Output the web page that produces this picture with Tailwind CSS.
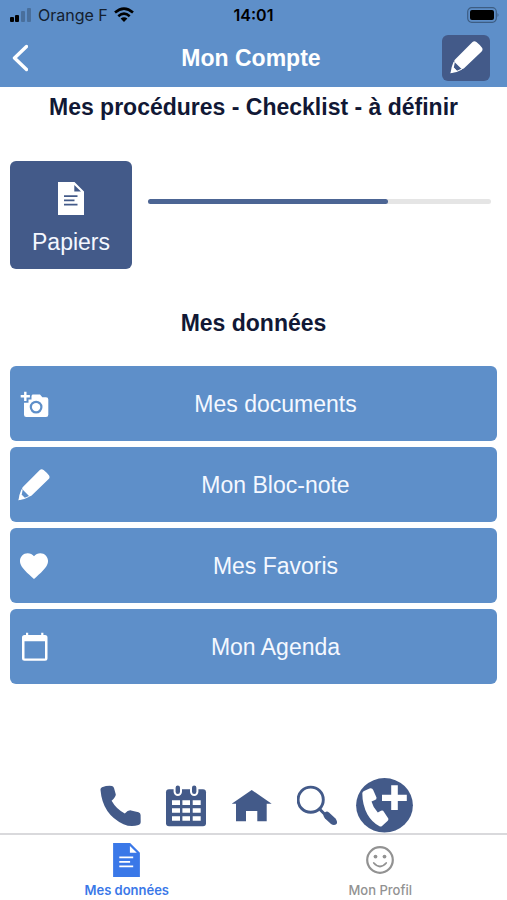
<!DOCTYPE html>
<html lang="fr">
<head>
<meta charset="utf-8">
<meta name="viewport" content="width=device-width, initial-scale=1">
<title>Mon Compte</title>
<script src="https://cdn.jsdelivr.net/npm/@tailwindcss/browser@4"></script>
</head>
<body class="flex min-h-screen flex-col bg-white font-['Liberation_Sans',Arial,sans-serif] text-[23px] text-[#111835]">

<!-- Shared icon shapes -->
<svg class="hidden" aria-hidden="true">
  <symbol id="pencil" viewBox="0 0 34 34">
    <path fill="currentColor" d="M23.200 1Q25-.6 27.200 1Q30.600 3.600 33 7Q34.200 9 32.600 10.700L14.500 28.200Q13.200 29.300 11.700 28.600L4.600 21.600Q4 20.200 5.200 19Z"/>
    <path fill="currentColor" d="M3.700 21.500L5 22 3.900 27.300 7.200 30.600 11.800 28.600 12.600 29.300Q7 32.600.5 33.300Q1.200 27 3.700 21.500Z"/>
    <path fill="currentColor" d="M3.600 27.400L7 30.700.5 33.300Z"/>
  </symbol>
  <symbol id="document" viewBox="0 0 26 33">
    <path fill="currentColor" fill-rule="evenodd" d="M0 0H16.500L26 9.500V33H0ZM16.300 3V9.500H23ZM6 13.200V14.900H19.500V13.200ZM6 17.500V19.200H16.500V17.500ZM6 21.800V23.500H19.500V21.800Z"/>
  </symbol>
</svg>

<header class="bg-[#5e8fc9]">
  <div class="grid h-7 grid-cols-3 items-center px-2 pt-0.5 font-[Inter,sans-serif] text-[16px] leading-6 text-black">
    <div class="flex items-center gap-1.5">
      <svg class="h-4 w-6" viewBox="0 0 24 16" aria-label="Réseau">
        <rect x="2" y="10" width="4" height="5" rx="1"/><rect x="7" y="8" width="4" height="7" rx="1"/>
        <g opacity=".22"><rect x="13" y="4" width="4" height="11" rx="1"/><rect x="19" y="1" width="4" height="14" rx="1"/></g>
      </svg>
      <span class="whitespace-nowrap text-[#14202f]">Orange F</span>
      <svg class="h-4 w-5" viewBox="0 0 20 16" aria-label="Wi-Fi">
        <g fill="none" stroke="#000" stroke-width="2.600"><path d="M1 5.600Q10-2.200 19 5.600"/><path d="M4.300 9.200Q10 4.200 15.700 9.200"/></g>
        <path d="M6.600 11.600Q10 8.800 13.400 11.600L10 15Z"/>
      </svg>
    </div>
    <time class="text-center font-semibold">14:01</time>
    <svg class="h-4 w-8 justify-self-end" viewBox="0 0 32 16" aria-label="Batterie">
      <rect x=".7" y=".7" width="28.600" height="14.600" rx="4" fill="none" stroke="#3d5d83" stroke-width="1.200"/>
      <rect x="3" y="3" width="24" height="10" rx="2"/><path fill="#3d5d83" d="M30.500 6Q32.500 8 30.500 10Z"/>
    </svg>
  </div>
  <div class="grid h-[59px] grid-cols-[48px_1fr_48px] items-center pr-[17px] pl-2">
    <button type="button" aria-label="Retour" class="flex h-12 items-center pl-1 text-white">
      <svg class="h-7 w-4" viewBox="0 0 16 28" fill="none" stroke="currentColor" stroke-width="3.400" stroke-linecap="round" stroke-linejoin="round"><path d="M14.500 2.500L2.500 14 14.500 25.500"/></svg>
    </button>
    <h1 class="pt-0.5 pl-1 text-center font-bold text-white">Mon Compte</h1>
    <button type="button" aria-label="Modifier" class="flex h-[46px] items-center justify-center rounded-md bg-[#435a89] text-white">
      <svg class="size-[33px]"><use href="#pencil"/></svg>
    </button>
  </div>
</header>

<main class="flex flex-1 flex-col px-2.5">
  <h2 class="text-center leading-10 font-bold">Mes procédures - Checklist - à définir</h2>
  <section class="mt-[34px] flex items-start gap-4 pr-1.5">
    <button type="button" class="flex h-[108px] w-[122px] flex-col items-center rounded-md bg-[#435a89] pt-[21px] text-[#f4f7ff]">
      <svg class="h-[33px] w-[26px] text-white"><use href="#document"/></svg>
      <span class="mt-[11px] leading-8">Papiers</span>
    </button>
    <div role="progressbar" aria-label="Papiers" aria-valuenow="70" aria-valuemin="0" aria-valuemax="100" class="mt-[38px] h-[5px] flex-1 rounded-full bg-[#e5e5e5]">
      <div class="h-full rounded-full bg-[#4c6594]" style="width:70%"></div>
    </div>
  </section>

  <h2 class="mt-[34px] text-center leading-10 font-bold">Mes données</h2>
  <section class="mt-[23px] flex flex-col gap-1.5 text-[#f4f8ff]">
    <button type="button" class="flex h-[75px] items-center gap-1 rounded-md bg-[#5e8fc9] pl-2">
      <svg class="size-8 text-white" viewBox="0 0 32 32" fill="currentColor">
        <path d="M6.100 3.700H8.500V7.100H11.900V9.500H8.500V12.900H6.100V9.500H2.700V7.100H6.100Z"/>
        <path fill-rule="evenodd" d="M10.500 11.500H13.500V7.700L14.500 6.600H22L24.300 9.200H28Q30.300 9.200 30.300 11.500V26.700Q30.300 29 28 29H8.300Q6 29 6 26.700V14.800H10.500ZM18.100 12.700A6.400 6.400 0 1 0 18.100 25.500A6.400 6.400 0 1 0 18.100 12.700Z"/>
        <circle cx="18.100" cy="19.100" r="4.200"/>
      </svg>
      <span class="flex-1 pt-0.5 text-center">Mes documents</span>
    </button>
    <button type="button" class="flex h-[75px] items-center gap-1 rounded-md bg-[#5e8fc9] pl-2">
      <svg class="size-8 text-white"><use href="#pencil"/></svg>
      <span class="flex-1 pt-0.5 text-center">Mon Bloc-note</span>
    </button>
    <button type="button" class="flex h-[75px] items-center gap-1 rounded-md bg-[#5e8fc9] pl-2">
      <svg class="size-8 text-white" viewBox=".6 .6 22.800 22.800" fill="currentColor"><path d="M12 21.350l-1.450-1.320C5.400 15.360 2 12.280 2 8.500 2 5.420 4.420 3 7.500 3c1.740 0 3.410.81 4.500 2.090C13.090 3.810 14.760 3 16.500 3 19.580 3 22 5.420 22 8.500c0 3.780-3.400 6.860-8.550 11.540L12 21.350z"/></svg>
      <span class="flex-1 pt-0.5 text-center">Mes Favoris</span>
    </button>
    <button type="button" class="flex h-[75px] items-center gap-1 rounded-md bg-[#5e8fc9] pl-2">
      <svg class="size-8 text-white" viewBox="0 0 32 32" fill="currentColor"><path fill-rule="evenodd" d="M8 1.700H10.200V4H23.200V1.700H25.400V4H27Q29.500 4 29.500 6.500V27.200Q29.500 29.700 27 29.700H6.500Q4 29.700 4 27.200V6.500Q4 4 6.500 4H8ZM6.500 10.300V27.500H27V10.300Z"/></svg>
      <span class="flex-1 pt-0.5 text-center">Mon Agenda</span>
    </button>
  </section>

  <nav aria-label="Raccourcis" class="mt-auto flex items-center justify-center gap-[17px] pl-[5px] text-[#435a89]">
    <div class="flex gap-6">
      <a href="#" aria-label="Téléphone"><svg class="size-[42px]" viewBox="0 0 42 42" fill="currentColor"><path d="M3 2.200Q8.500.2 13 .9Q14.500 1.200 15 3L16.800 9.500Q16.800 12 12.600 15.800Q17.500 24.500 25.800 28.400Q29 25 32 25.400L39.500 27.200Q41.500 27.900 41.600 30L41.700 37.200Q41.700 39.400 39.500 40Q32 42.500 24.500 39.200Q3.500 29.500 1.500 5Q1.300 3 3 2.200Z"/></svg></a>
      <a href="#" aria-label="Calendrier"><svg class="size-[42px]" viewBox="0 0 42 42">
        <rect x="1" y="4.300" width="40" height="36.900" rx="3" fill="currentColor"/>
        <path fill="#fff" d="M7 15.300h8v4.700H7zM17.400 15.300h7.600v4.700h-7.600zM27.700 15.300h8v4.700h-8zM7 23.300h8v4.500H7zM17.400 23.300h7.600v4.500h-7.600zM27.700 23.300h8v4.500h-8zM7 31.200h8v4.500H7zM17.400 31.200h7.600v4.500h-7.600zM27.700 31.200h8v4.500h-8z"/>
        <g fill="currentColor" stroke="#fff" stroke-width="2"><rect x="9.600" y="-.5" width="6.400" height="10.500" rx="3.200"/><rect x="26" y="-.5" width="6.400" height="10.500" rx="3.200"/></g>
      </svg></a>
      <a href="#" aria-label="Accueil"><svg class="size-[42px]" viewBox="0 0 42 42" fill="currentColor"><path d="M20.700 5L40.700 18.700H35.700V36.200H26.300V26H15V36.200H5V18.700H.7Z"/></svg></a>
      <a href="#" aria-label="Rechercher"><svg class="size-[42px]" viewBox="0 0 42 42" fill="none" stroke="currentColor"><circle cx="13.700" cy="14.700" r="12.600" stroke-width="2.900"/><path d="M23 24.500L28 29.500" stroke-width="3"/><path fill="currentColor" stroke="none" d="M27 28.200Q29.500 25.300 32 27.500L38.500 33.500Q41 37 39.500 39Q37 41 34 39L28 33.500Q25.500 30.500 27 28.200Z"/></svg></a>
    </div>
    <a href="#" aria-label="Appel d'urgence"><svg class="h-[55px] w-[57px]" viewBox="0 0 57 55">
      <ellipse cx="28.500" cy="27.300" rx="28.400" ry="27.200" fill="currentColor"/>
      <path fill="#fff" d="M35.200 7.200H41.800V16.700H50.800V23H41.800V32H35.200V23H26V16.700H35.200Z"/>
      <path fill="#fff" d="M6.300 15Q6.800 13.700 8 13L13.500 10.500Q16.300 9.800 17.200 12L20.500 19.500Q20.800 21.500 19 22L15.500 23.600Q17 29.500 21.800 34.500L25 32.800Q27 32 28 34L32.300 40.500Q32.700 42 31.500 43L26 48Q24.800 49 23.500 48.200Q16 44.500 11.500 36.500Q6.300 27 6.300 15Z"/>
    </svg></a>
  </nav>
</main>

<nav aria-label="Onglets" class="grid h-[67px] grid-cols-2 border-t-2 border-[#d9d9dc] font-[Inter,sans-serif] text-[13px] leading-4">
  <a href="#" aria-current="page" class="flex flex-col items-center gap-[5px] pt-2 font-semibold text-[#3a78e8]">
    <svg class="h-[34px] w-[27px]"><use href="#document"/></svg>
    <span>Mes données</span>
  </a>
  <a href="#" class="flex flex-col items-center gap-[5px] pt-2 font-medium text-[#929292]">
    <svg class="size-[34px]" viewBox="0 0 34 34" fill="none" stroke="currentColor" stroke-width="2.200"><circle cx="17" cy="17" r="12.800"/><path d="M10.800 20Q17 27 23.200 20" stroke-width="1.800" stroke-linecap="round"/><g fill="currentColor" stroke="none"><circle cx="12.500" cy="13.600" r="1.900"/><circle cx="21.500" cy="13.600" r="1.900"/></g></svg>
    <span>Mon Profil</span>
  </a>
</nav>
</body>
</html>
